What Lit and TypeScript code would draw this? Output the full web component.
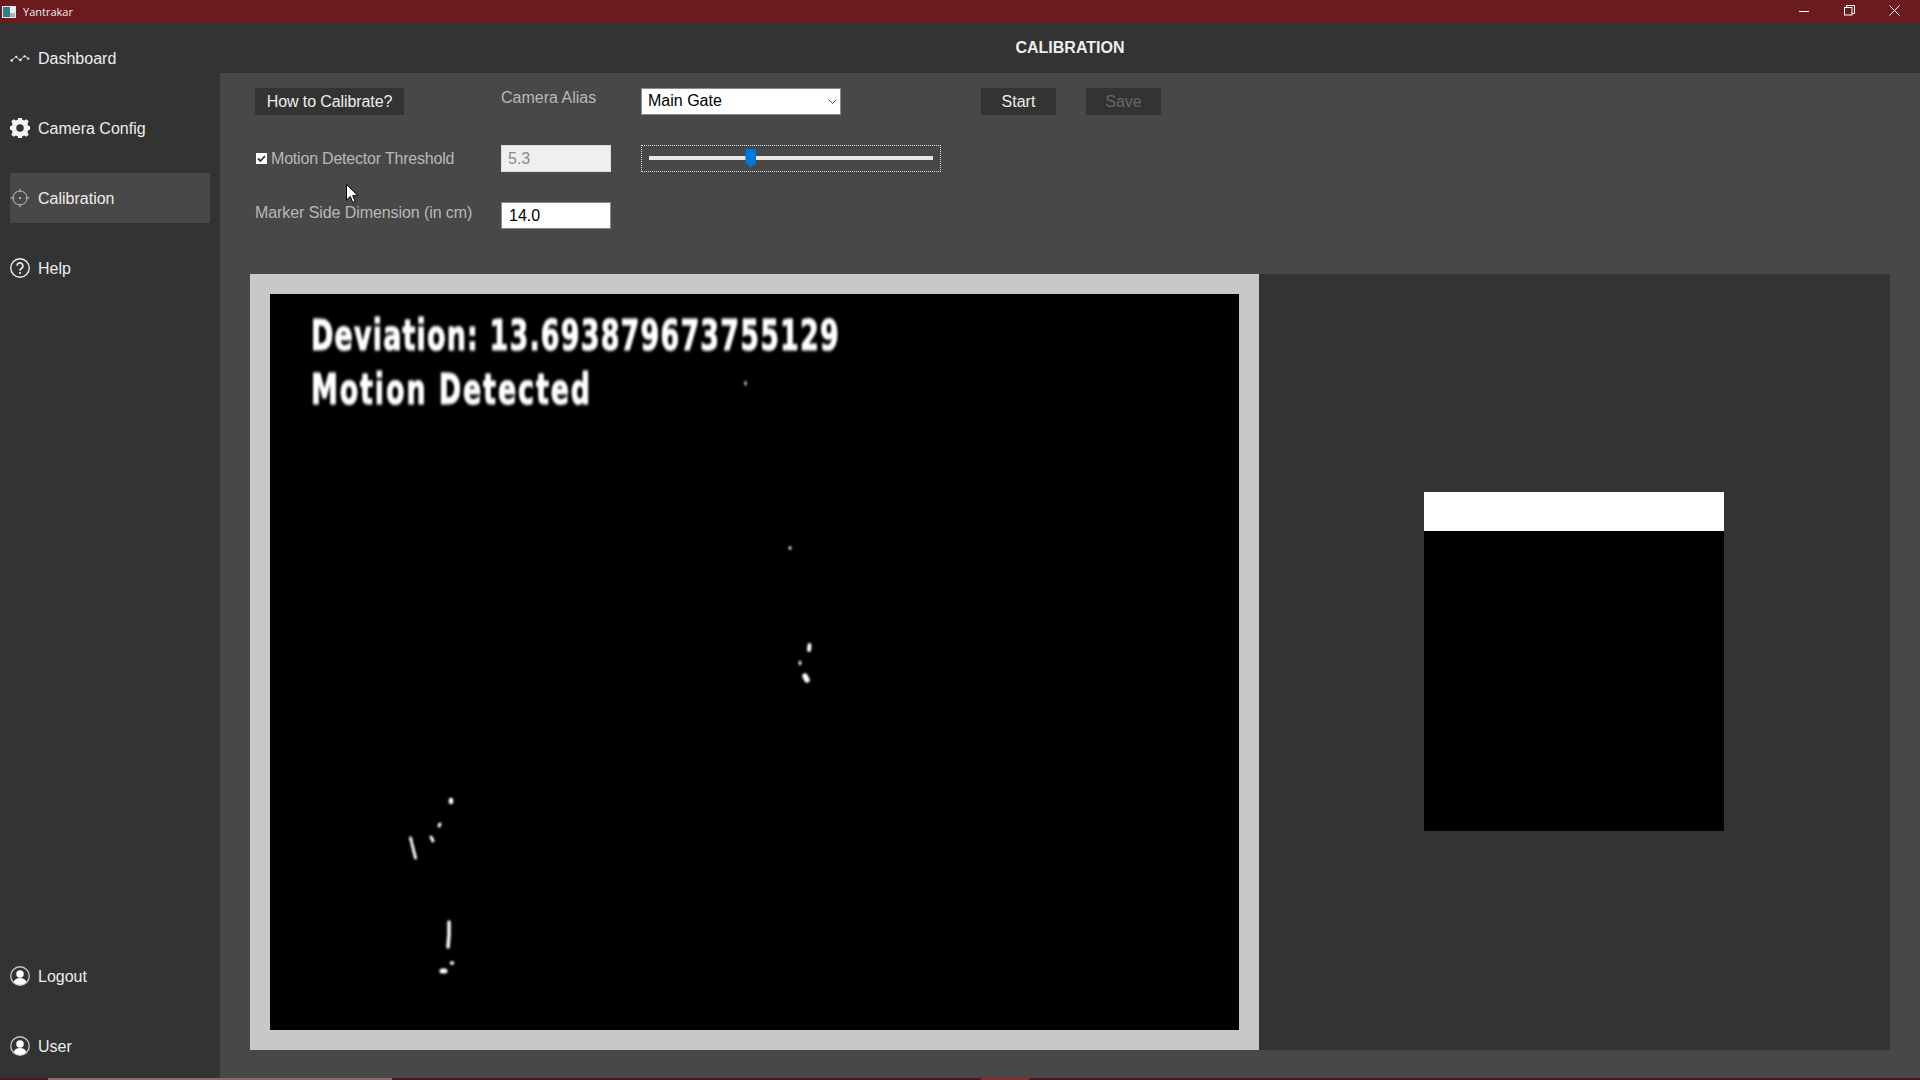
import { LitElement, html, css, svg } from "lit";
import { customElement } from "lit/decorators.js";

const icons: Record<string, unknown> = {
  dash: svg`<path d="M1.5 15.5 7 10.5l5 4 5.5-5 5 3.5" fill="none" stroke="#e8e8e8" stroke-width="1.1"/><circle cx="2" cy="15" r="1.5" fill="#eee"/><circle cx="7.5" cy="10.5" r="1.3" fill="#eee"/><circle cx="12.5" cy="14.5" r="1.5" fill="#eee"/><circle cx="17.5" cy="10" r="1.3" fill="#eee"/><circle cx="22" cy="12.8" r="1.3" fill="#eee"/>`,
  gear: svg`<path fill="#f2f2f2" fill-rule="evenodd" d="M10 1h4l.7 3a8.5 8.5 0 0 1 2.3 1l2.7-1.6 2.8 2.8L20.9 9a8.5 8.5 0 0 1 1 2.3l2.9.7v4l-2.9.7A8.500 8.500 0 0 1 20.900 19l1.600 2.700-2.800 2.800L17 22.900a8.500 8.500 0 0 1-2.300 1L14 27h-4l-.7-3.100A8.500 8.500 0 0 1 7 22.900l-2.700 1.600-2.800-2.800L3.100 19a8.500 8.500 0 0 1-1-2.300L-.8 16v-4l2.900-.7A8.500 8.500 0 0 1 3.100 9L1.500 6.200l2.800-2.800L7 5a8.500 8.500 0 0 1 2.300-1zM12 9.500a4.500 4.500 0 1 0 0 9 4.500 4.500 0 0 0 0-9z" transform="translate(0 -2)"/>`,
  target: svg`<circle cx="12" cy="12" r="8.400" fill="none" stroke="#bdbdbd" stroke-width="1.200"/><path d="M12 1v4M12 19v4M1 12h4M19 12h4" stroke="#bdbdbd" stroke-width="1.200"/><circle cx="12" cy="12" r="1.300" fill="#cfcfcf"/>`,
  help: svg`<circle cx="12" cy="12" r="11.100" fill="none" stroke="#f0f0f0" stroke-width="1.600"/><path d="M8.500 9.300a3.500 3.500 0 1 1 5.600 2.800c-1.300 1-2.100 1.600-2.100 3.100" fill="none" stroke="#f0f0f0" stroke-width="2"/><circle cx="12" cy="18" r="1.300" fill="#f0f0f0"/>`,
  user: svg`<circle cx="12" cy="12" r="11.100" fill="none" stroke="#c4c4c4" stroke-width="1.600"/><circle cx="12" cy="9.500" r="4.500" fill="#fff"/><path d="M4.500 19.500c.8-3.800 3.800-5.200 7.500-5.200s6.700 1.400 7.500 5.200a10.500 10.500 0 0 1-15 0z" fill="#fff"/>`,
};

@customElement("app-root")
export class AppRoot extends LitElement {
  static styles = css`
    :host {
      display: flex;
      flex-direction: column;
      position: relative;
      width: 1920px;
      height: 1080px;
      overflow: hidden;
      background: #484848;
      font-family: "Liberation Sans", Arial, sans-serif;
      font-size: 16px;
    }
    .titlebar {
      flex: 0 0 23px;
      display: flex;
      align-items: center;
      background: #6b1a1e;
      color: #eee;
      font-family: "Open Sans", sans-serif;
      font-size: 11px;
    }
    .app-icon {
      display: block;
      margin: 0 7px 0 2px;
    }
    .caption {
      flex: 1;
    }
    .win {
      display: flex;
      align-items: center;
      gap: 34px;
      margin: 0 20px 2px 0;
    }
    .win svg {
      display: block;
    }
    .win .min {
      margin-right: 1px;
    }
    .body {
      flex: 1;
      display: flex;
      min-height: 0;
    }
    .sidebar {
      flex: 0 0 220px;
      background: #333333;
      display: flex;
      flex-direction: column;
      padding: 10px 10px 7px;
      box-sizing: border-box;
      gap: 20px;
    }
    .spacer {
      flex: 1;
    }
    .nav {
      height: 50px;
      display: flex;
      align-items: center;
      gap: 8px;
      color: #eeeeee;
      flex: none;
    }
    .nav span {
      margin-top: 2px;
    }
    .nav.active {
      background: #484848;
    }
    .nav svg {
      width: 20px;
      height: 20px;
      display: block;
      flex: none;
    }
    .main {
      flex: 1;
      display: flex;
      flex-direction: column;
      min-width: 0;
    }
    .header {
      flex: 0 0 50px;
      background: #333333;
      display: flex;
      align-items: center;
      justify-content: center;
      color: #eee;
      font-weight: bold;
    }
    .content {
      flex: 1;
      display: flex;
      flex-direction: column;
      padding: 15px 30px 28px;
      min-height: 0;
    }
    .form {
      display: grid;
      grid-template-columns: 246px 140px 340px 105px 75px;
      grid-auto-rows: 27px;
      row-gap: 30px;
      margin-left: 5px;
      align-items: center;
      justify-items: start;
    }
    .btn {
      height: 27px;
      border: 0;
      background: #333333;
      color: #eeeeee;
      font: inherit;
      padding: 0;
    }
    .btn.help {
      width: 149px;
      letter-spacing: -0.1px;
    }
    .btn.act {
      width: 75px;
    }
    .btn[disabled] {
      color: #666666;
    }
    .label {
      color: #b8b8b8;
      position: relative;
    }
    .label.alias {
      top: -4px;
    }
    .label.marker-label {
      top: -3px;
      letter-spacing: -0.08px;
    }
    .check {
      display: flex;
      align-items: center;
      gap: 4px;
      letter-spacing: -0.2px;
    }
    .box {
      width: 11px;
      height: 11px;
      background: #fff;
      display: block;
      margin-left: 1px;
    }
    .field {
      width: 110px;
      height: 27px;
      box-sizing: border-box;
      border: 1px solid #8a8a8a;
      background: #fff;
      color: #000;
      font: inherit;
      padding: 0 7px;
      outline: none;
    }
    .field[disabled] {
      background: #efefef;
      border-color: #dddddd;
      color: #8a8a8a;
      padding-left: 6px;
    }
    .select {
      width: 200px;
      height: 27px;
      box-sizing: border-box;
      border: 1px solid #8a8a8a;
      background: #fff;
      display: flex;
      align-items: center;
      justify-content: space-between;
      color: #000;
      padding: 0 3px 0 6px;
    }
    .select span {
      margin-bottom: 2px;
    }
    .slider {
      width: 300px;
      height: 27px;
      box-sizing: border-box;
      border: 1px dotted #e0e0e0;
      display: flex;
      align-items: center;
      justify-content: center;
    }
    .slider input {
      -webkit-appearance: none;
      appearance: none;
      width: 284px;
      height: 20px;
      margin: 0 0 2px;
      background: transparent;
      outline: none;
    }
    .slider input::-webkit-slider-runnable-track {
      height: 4px;
      background: #e6e6e6;
    }
    .slider input::-webkit-slider-thumb {
      -webkit-appearance: none;
      width: 11px;
      height: 19px;
      margin-top: -7px;
      background: #0078d7;
      clip-path: polygon(0 0, 100% 0, 100% 76%, 50% 100%, 0 76%);
    }
    .preview {
      margin-top: 45px;
      flex: 1;
      display: flex;
      min-height: 0;
    }
    .frame {
      flex: 0 0 1009px;
      box-sizing: border-box;
      border: 20px solid #c8c8c8;
      background: #000;
      position: relative;
      overflow: hidden;
    }
    .overlay {
      position: absolute;
      left: 41px;
      top: 14px;
      color: #fff;
      font-family: "DejaVu Sans", sans-serif;
      font-weight: bold;
      font-size: 27px;
      white-space: nowrap;
      line-height: 35px;
      transform-origin: 0 0;
      transform: scale(1, 1.55);
      -webkit-text-stroke: 0.7px #fff;
      filter: blur(0.9px);
    }
    .overlay .l1 {
      letter-spacing: 1.15px;
    }
    .overlay .l2 {
      letter-spacing: 1.85px;
    }
    .specks {
      position: absolute;
      left: 0;
      top: 0;
      width: 100%;
      height: 100%;
      filter: blur(0.8px);
    }
    .side {
      flex: 1;
      background: #333333;
      display: flex;
      align-items: center;
      justify-content: center;
      padding-right: 30px;
    }
    .marker {
      width: 300px;
      height: 339px;
      background: #000;
      margin: 0 0 2px 28px;
    }
    .marker div {
      height: 39px;
      background: #fff;
    }
    .taskstrip {
      flex: 0 0 2px;
      background: #4a1a20;
      display: flex;
    }
    .seg1 {
      width: 344px;
      margin-left: 48px;
      background: #8a6a70;
    }
    .seg2 {
      width: 48px;
      margin-left: 589px;
      background: #8a2a30;
    }
    .cursor {
      position: absolute;
      left: 346px;
      top: 184px;
      display: block;
    }
  `;

  private nav(icon: string, label: string, active = false) {
    return html`<div class="nav ${active ? "active" : ""}">
      <svg viewBox="0 0 24 24">${icons[icon]}</svg><span>${label}</span>
    </div>`;
  }

  render() {
    return html`
      <div class="titlebar">
        <svg class="app-icon" width="14" height="12" viewBox="0 0 14 12">
          <rect width="14" height="12" fill="#dfe6ea" />
          <rect x="1" y="1" width="7" height="10" fill="#2f7f8a" />
          <rect x="8" y="1" width="5" height="6" fill="#e8f0f2" />
          <rect x="8" y="7" width="5" height="4" fill="#9fb4bc" />
        </svg>
        <span class="caption">Yantrakar</span>
        <div class="win">
          <svg class="min" width="10" height="10" viewBox="0 0 10 10"><path d="M0 5.500h10" stroke="#fff" /></svg>
          <svg width="11" height="11" viewBox="0 0 11 11" fill="none" stroke="#fff">
            <rect x=".5" y="2.500" width="7.500" height="7.500" /><path d="M2.500 2.500V.5h8v8H8" />
          </svg>
          <svg width="11" height="11" viewBox="0 0 11 11" stroke="#fff"><path d="M.5.5l10 10M10.500.5l-10 10" /></svg>
        </div>
      </div>
      <div class="body">
        <nav class="sidebar">
          ${this.nav("dash", "Dashboard")} ${this.nav("gear", "Camera Config")}
          ${this.nav("target", "Calibration", true)} ${this.nav("help", "Help")}
          <div class="spacer"></div>
          ${this.nav("user", "Logout")} ${this.nav("user", "User")}
        </nav>
        <div class="main">
          <div class="header">CALIBRATION</div>
          <div class="content">
            <div class="form">
              <button class="btn help">How to Calibrate?</button>
              <span class="label alias">Camera Alias</span>
              <div class="select">
                <span>Main Gate</span>
                <svg width="9" height="5" viewBox="0 0 9 5" fill="none" stroke="#555"><path d="M.5.5l4 4 4-4" /></svg>
              </div>
              <button class="btn act">Start</button>
              <button class="btn act" disabled>Save</button>

              <label class="label check">
                <svg class="box" viewBox="0 0 11 11"><path d="M2 5.500l2.500 2.500L9 3" fill="none" stroke="#333" stroke-width="1.800" /></svg>
                <span>Motion Detector Threshold</span>
              </label>
              <input class="field" disabled .value=${"5.3"} />
              <div class="slider"><input type="range" min="0" max="15" step="0.1" .value=${"5.3"} /></div>
              <span></span><span></span>

              <span class="label marker-label">Marker Side Dimension (in cm)</span>
              <input class="field" .value=${"14.0"} />
            </div>
            <div class="preview">
              <div class="frame">
                <div class="overlay">
                  <div class="l1">Deviation: 13.693879673755129</div>
                  <div class="l2">Motion Detected</div>
                </div>
                <svg class="specks" viewBox="270 294 969 736" fill="#fff" stroke="#fff" stroke-linecap="round">
                  <g fill="none" stroke-width="3">
                    <path d="M410.500 838l1 4M412 844l3.500 14" />
                    <path d="M449 922v13l-1 12" stroke-width="3.500" />
                    <path d="M439 826l1-2M431 837l2 4" />
                    <path d="M809 650l.5-5" stroke-width="4" />
                    <path d="M805 676l2 4" stroke-width="5.500" />
                    <path d="M442 971h3" stroke-width="5" />
                    <path d="M451.500 963h1" stroke-width="3.500" />
                    <path d="M451 800v2" stroke-width="4.500" />
                    <path d="M800 662v2" stroke-width="2.500" />
                    <path d="M790 547.500v1" stroke-width="2.500" />
                    <path d="M745.500 382v2.500" stroke-width="1.800" />
                  </g>
                </svg>
              </div>
              <div class="side"><div class="marker"><div></div></div></div>
            </div>
          </div>
        </div>
      </div>
      <div class="taskstrip"><div class="seg1"></div><div class="seg2"></div></div>
      <svg class="cursor" width="13" height="20" viewBox="0 0 13 20">
        <path d="M.5.5v15.500l3.800-3.500 2.500 6 2.400-1-2.500-5.800h5.300z" fill="#fff" stroke="#000" />
      </svg>
    `;
  }
}
